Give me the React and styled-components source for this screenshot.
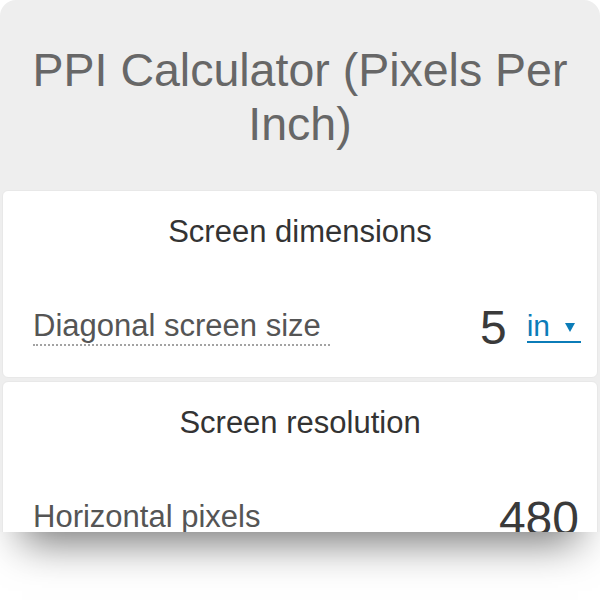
import React from 'react';
import styled, { createGlobalStyle } from 'styled-components';

const GlobalStyle = createGlobalStyle`
    html, body {
        margin: 0;
        padding: 0;
        background: #ffffff;
        font-family: "Liberation Sans", Arial, Helvetica, sans-serif;
    }
`;

const Page = styled.div`
    width: 600px;
    height: 600px;
    overflow: hidden;
`;

const Widget = styled.main`
    width: 600px;
    height: 532px;
    background: #eeeeee;
    border-radius: 16px 16px 0 0;
    overflow: hidden;
    box-shadow: 0 32px 40px -22px rgba(0, 0, 0, 0.55);
    display: flex;
    flex-direction: column;
    gap: 3px;
`;

const Title = styled.h1`
    margin: 0;
    padding: 43px 16px 36px;
    font-size: 46.5px;
    line-height: 54px;
    font-weight: 400;
    color: #676767;
    text-align: center;
`;

const Card = styled.section`
    margin: 0 2px;
    background: #ffffff;
    border-radius: 6px;
    border: 1px solid #e8e8e8;
    padding: 23px 16px 21px 16px;
    flex-shrink: 0;
`;

const CardTitle = styled.h2`
    margin: 0 0 50px;
    font-size: 31px;
    line-height: 36px;
    font-weight: 400;
    color: #333333;
    text-align: center;
`;

const Row = styled.div`
    display: flex;
    align-items: flex-start;
    height: 56px;
    padding-left: 14px;
`;

const Label = styled.span`
    margin-top: 8px;
    font-size: 31px;
    line-height: 36px;
    color: #555555;
    padding-right: ${p => (p.$dotted ? '9px' : '0')};
    border-bottom: ${p => (p.$dotted ? '2px dotted #a3a3a3' : 'none')};
`;

const Value = styled.span`
    margin-left: auto;
    margin-right: ${p => p.$right || 0}px;
    font-size: 48px;
    line-height: 56px;
    color: #3a3a3a;
`;

const Unit = styled.span`
    display: inline-flex;
    align-items: center;
    gap: 15px;
    margin: 11px 0 0 20px;
    padding-right: 6px;
    font-size: 30px;
    line-height: 30px;
    color: #0b7cb8;
    border-bottom: 2px solid #0b7cb8;
`;

const Caret = styled.svg`
    width: 10px;
    height: 9px;
    fill: #0b7cb8;
    margin-top: 3px;
`;

const App = () => {
    return (
        <Page>
            <GlobalStyle />
            <Widget>
                <Title>PPI Calculator (Pixels Per Inch)</Title>
                <Card>
                    <CardTitle>Screen dimensions</CardTitle>
                    <Row>
                        <Label $dotted>Diagonal screen size</Label>
                        <Value>5</Value>
                        <Unit>
                            in
                            <Caret viewBox="0 0 10 9">
                                <polygon points="0,0 10,0 5,9" />
                            </Caret>
                        </Unit>
                    </Row>
                </Card>
                <Card>
                    <CardTitle>Screen resolution</CardTitle>
                    <Row>
                        <Label>Horizontal pixels</Label>
                        <Value $right={2}>480</Value>
                    </Row>
                </Card>
            </Widget>
        </Page>
    );
};

export default App;
